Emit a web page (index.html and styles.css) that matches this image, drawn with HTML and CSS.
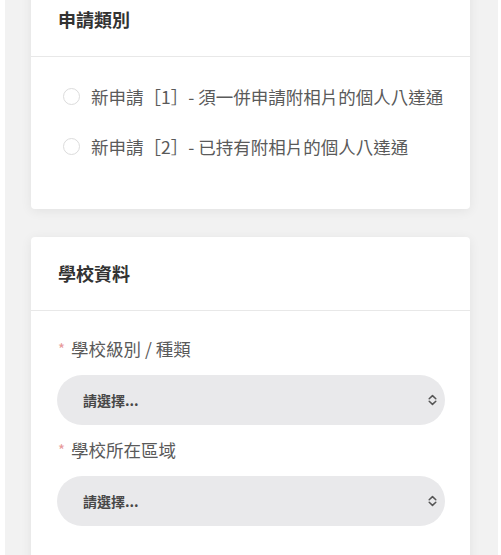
FILE: index.html
```html
<!DOCTYPE html>
<html lang="zh-Hant">
<head>
<meta charset="utf-8">
<link rel="stylesheet" href="styles.css">
</head>
<body>
<div class="page">
  <section class="card card-first">
    <div class="card-head"><h2 class="card-title">申請類別</h2></div>
    <div class="card-body radios">
      <label class="radio-row"><span class="radio"></span><span class="radio-text">新申請［1］- 須一併申請附相片的個人八達通</span></label>
      <label class="radio-row"><span class="radio"></span><span class="radio-text">新申請［2］- 已持有附相片的個人八達通</span></label>
    </div>
  </section>
  <section class="card">
    <div class="card-head"><h2 class="card-title">學校資料</h2></div>
    <div class="card-body fields">
      <div class="field">
        <div class="field-label"><span class="req">*</span>學校級別 / 種類</div>
        <div class="select"><span class="select-text">請選擇...</span>
          <svg class="chev" width="9" height="12" viewBox="0 0 9 12"><path d="M1.2 4.8 L4.5 1.6 L7.8 4.8 M1.2 7.2 L4.5 10.4 L7.8 7.2" fill="none" stroke="#555" stroke-width="1.5" stroke-linecap="round" stroke-linejoin="round"/></svg>
        </div>
      </div>
      <div class="field">
        <div class="field-label"><span class="req">*</span>學校所在區域</div>
        <div class="select"><span class="select-text">請選擇...</span>
          <svg class="chev" width="9" height="12" viewBox="0 0 9 12"><path d="M1.2 4.8 L4.5 1.6 L7.8 4.8 M1.2 7.2 L4.5 10.4 L7.8 7.2" fill="none" stroke="#555" stroke-width="1.5" stroke-linecap="round" stroke-linejoin="round"/></svg>
        </div>
      </div>
    </div>
  </section>
</div>
</body>
</html>
```

FILE: styles.css
```css
html, body {
  margin: 0;
  padding: 0;
  background: #ffffff;
}
body {
  font-family: "Noto Sans CJK TC", "Noto Sans", sans-serif;
  color: #555;
}
.page {
  margin: 0 3px 0 5px;
  height: 555px;
  overflow: hidden;
  background: #f2f2f2;
  padding: 0 28px 0 26px;
  box-sizing: border-box;
}
.card {
  background: #fff;
  border-radius: 4px;
  box-shadow: 0 2px 12px rgba(0, 0, 0, 0.07);
  margin-bottom: 28px;
}
.card-first {
  margin-top: -17px;
}
.card-head {
  padding: 23px 27px 24px;
  border-bottom: 1px solid #e8e8e8;
}
.card-title {
  margin: 0;
  font-size: 18px;
  line-height: 26px;
  font-weight: 700;
  color: #333;
}
.radios {
  padding: 14px 25px 38px 32px;
}
.radio-row {
  display: flex;
  align-items: center;
  height: 50px;
}
.radio {
  width: 15px;
  height: 15px;
  border: 1px solid #dcdcdc;
  border-radius: 50%;
  margin-right: 11px;
  flex: none;
}
.radio-text {
  font-size: 17.5px;
  color: #5a5a5a;
  white-space: nowrap;
}
.fields {
  padding: 25px 25px 60px 26px;
  display: flex;
  flex-direction: column;
  gap: 12px;
}
.field-label {
  font-size: 17.5px;
  line-height: 26px;
  color: #5a5a5a;
  margin-bottom: 13px;
  display: flex;
  align-items: center;
}
.req {
  color: #e89a9a;
  font-size: 15px;
  margin: 0 6px 0 1px;
}
.select {
  height: 50px;
  border-radius: 25px;
  background: #e9e9eb;
  display: flex;
  align-items: center;
  justify-content: space-between;
  padding: 0 8px 0 26px;
}
.select-text {
  font-size: 14px;
  font-weight: 700;
  color: #484848;
}
.chev {
  display: block;
}
```
